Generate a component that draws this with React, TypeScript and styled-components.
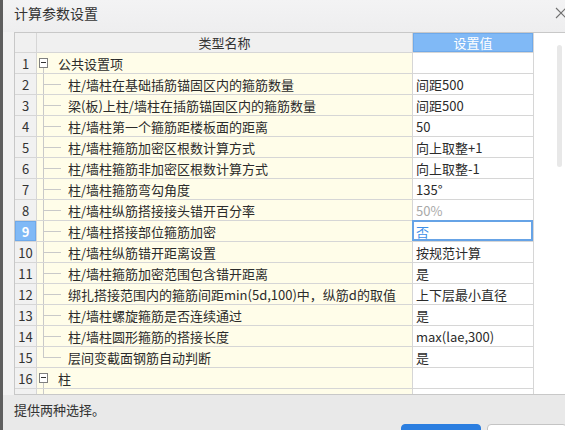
import * as React from 'react'
import styled, {createGlobalStyle, css} from 'styled-components'

const GlobalStyle = createGlobalStyle`
  html, body {
    margin: 0;
    padding: 0;
    overflow: hidden;
    background: #f0f0f0;
  }
`

const FONT = `"Noto Sans CJK SC", "Noto Sans", "Liberation Sans", sans-serif`
const LINE = '#d6d6d6'
const TREE = '#c9c9c9'
const BLUE = '#80b9f6'

// Dialog frame
const Window = styled.div`
  width: 565px;
  height: 430px;
  box-sizing: border-box;
  border-left: 3px solid #5e5e5e;
  background: #f2f2f2;
  display: flex;
  flex-direction: column;
  overflow: hidden;
  font-family: ${FONT};
  font-size: 13px;
  color: #2b2b2b;
`

const TitleBar = styled.div`
  height: 32px;
  flex: none;
  display: flex;
  align-items: flex-start;
  justify-content: space-between;
  padding-left: 11px;
  background: linear-gradient(#f3f3f4, #eeeeef);
`

const Title = styled.span`
  font-size: 14px;
  line-height: 20px;
  padding-top: 3px;
  color: #333;
`

const Close = styled.svg`
  margin-top: 7px;
  margin-right: -2px;
  flex: none;
`

// Grid area
const Body = styled.div`
  height: 363px;
  flex: none;
  display: flex;
  padding-left: 11px;
`

const GridBox = styled.div`
  flex: 1;
  display: flex;
  background: #fff;
  border: 1px solid #c8c8c8;
  border-right: none;
  overflow: hidden;
`

const Table = styled.div`
  display: grid;
  grid-template-columns: 22px 376px 121px;
  grid-template-rows: 20px;
  grid-auto-rows: 21px;
  flex: none;
  align-content: start;
`

const Cell = styled.div`
  box-sizing: border-box;
  border-right: 1px solid ${LINE};
  border-bottom: 1px solid ${LINE};
  display: flex;
  align-items: center;
  overflow: hidden;
  white-space: nowrap;
  position: relative;
`

const HeadCell = styled(Cell)<{$accent?: boolean}>`
  justify-content: center;
  background: #f0f0f0;
  color: #333;
  ${({$accent}) => $accent && css`
    background: ${BLUE};
    color: #fff;
    box-shadow: inset 0 0 0 1px #6ea9ea;
  `}
`

const NumCell = styled(Cell)<{$selected?: boolean}>`
  justify-content: center;
  background: #f1f1f1;
  color: #333;
  ${({$selected}) => $selected && css`
    background: ${BLUE};
    color: #fff;
    font-weight: bold;
    box-shadow: inset 0 0 0 1px #6ea9ea;
  `}
`

const NameCell = styled(Cell)`
  background: #fffde9;
`

const ValueCell = styled(Cell)<{$muted?: boolean; $selected?: boolean}>`
  padding-left: 3px;
  background: #fff;
  color: ${({$muted, $selected}) => $muted ? '#a9a9a9' : $selected ? '#3d8fe8' : '#2b2b2b'};
  overflow: visible;
  ${({$selected}) => $selected && css`
    &::after {
      content: '';
      position: absolute;
      left: -1px;
      top: -1px;
      right: 0;
      bottom: 0;
      border: 2px solid #66a3e6;
    }
  `}
`

// Tree drawing in the name column
const Gutter = styled.span<{$last?: boolean}>`
  position: relative;
  flex: none;
  width: 31px;
  align-self: stretch;
  &::before {
    content: '';
    position: absolute;
    left: 6px;
    top: 0;
    width: 1px;
    height: ${({$last}) => $last ? '50%' : '100%'};
    background: ${TREE};
  }
  &::after {
    content: '';
    position: absolute;
    left: 6px;
    top: 50%;
    width: 18px;
    height: 1px;
    background: ${TREE};
  }
`

const Expander = styled.span`
  position: relative;
  flex: none;
  box-sizing: border-box;
  width: 9px;
  height: 10px;
  margin: -1px 10px 0 2px;
  border: 1px solid #808080;
  background: #fff;
  &::before {
    content: '';
    position: absolute;
    left: 1px;
    top: 3px;
    width: 5px;
    height: 1px;
    background: #333;
  }
  &::after {
    content: '';
    position: absolute;
    left: 3px;
    top: 9px;
    width: 1px;
    height: 20px;
    background: ${TREE};
  }
`

const ScrollTrack = styled.div`
  flex: none;
  width: 31px;
`

const Thumb = styled.div`
  margin: 12px 0 0 23px;
  width: 5px;
  height: 122px;
  border-radius: 3px;
  background: #e8e8e8;
`

// Footer
const Footer = styled.div`
  flex: 1;
  background: #e9e9e9;
  padding-left: 11px;
  display: flex;
  flex-direction: column;
`

const Hint = styled.div`
  margin-top: 6px;
  line-height: 18px;
  color: #333;
`

const ButtonRow = styled.div`
  display: flex;
  gap: 6px;
  margin-top: 5px;
  padding-left: 387px;
`

const Button = styled.button<{$primary?: boolean}>`
  flex: none;
  width: 80px;
  height: 28px;
  border-radius: 4px;
  border: 1px solid ${({$primary}) => $primary ? '#2b7ee0' : '#c4c4c4'};
  background: ${({$primary}) => $primary ? '#2b7ee0' : '#fff'};
`

interface Row {
  name: string
  value?: string
  group?: boolean
  last?: boolean
  muted?: boolean
  selected?: boolean
}

const rows: Row[] = [
  {name: '公共设置项', group: true},
  {name: '柱/墙柱在基础插筋锚固区内的箍筋数量', value: '间距500'},
  {name: '梁(板)上柱/墙柱在插筋锚固区内的箍筋数量', value: '间距500'},
  {name: '柱/墙柱第一个箍筋距楼板面的距离', value: '50'},
  {name: '柱/墙柱箍筋加密区根数计算方式', value: '向上取整+1'},
  {name: '柱/墙柱箍筋非加密区根数计算方式', value: '向上取整-1'},
  {name: '柱/墙柱箍筋弯勾角度', value: '135°'},
  {name: '柱/墙柱纵筋搭接接头错开百分率', value: '50%', muted: true},
  {name: '柱/墙柱搭接部位箍筋加密', value: '否', selected: true},
  {name: '柱/墙柱纵筋错开距离设置', value: '按规范计算'},
  {name: '柱/墙柱箍筋加密范围包含错开距离', value: '是'},
  {name: '绑扎搭接范围内的箍筋间距min(5d,100)中，纵筋d的取值', value: '上下层最小直径'},
  {name: '柱/墙柱螺旋箍筋是否连续通过', value: '是'},
  {name: '柱/墙柱圆形箍筋的搭接长度', value: 'max(lae,300)'},
  {name: '层间变截面钢筋自动判断', value: '是', last: true},
  {name: '柱', group: true},
  {name: ''},
]

export default function App() {
  return (
    <Window>
      <GlobalStyle />
      <TitleBar>
        <Title>计算参数设置</Title>
        <Close width="12" height="12" viewBox="0 0 12 12">
          <path d="M1 1L11 11M11 1L1 11" stroke="#707070" strokeWidth="1.1" fill="none" />
        </Close>
      </TitleBar>
      <Body>
        <GridBox>
          <Table>
            <HeadCell />
            <HeadCell>类型名称</HeadCell>
            <HeadCell $accent>设置值</HeadCell>
            {rows.map((row, i) => (
              <React.Fragment key={i}>
                <NumCell $selected={row.selected}>{i < 16 ? i + 1 : ''}</NumCell>
                <NameCell>
                  {row.group ? <Expander /> : <Gutter $last={row.last} />}
                  {row.name}
                </NameCell>
                <ValueCell $muted={row.muted} $selected={row.selected}>
                  {row.value}
                </ValueCell>
              </React.Fragment>
            ))}
          </Table>
          <ScrollTrack>
            <Thumb />
          </ScrollTrack>
        </GridBox>
      </Body>
      <Footer>
        <Hint>提供两种选择。</Hint>
        <ButtonRow>
          <Button $primary aria-label="确定" />
          <Button aria-label="取消" />
        </ButtonRow>
      </Footer>
    </Window>
  )
}
